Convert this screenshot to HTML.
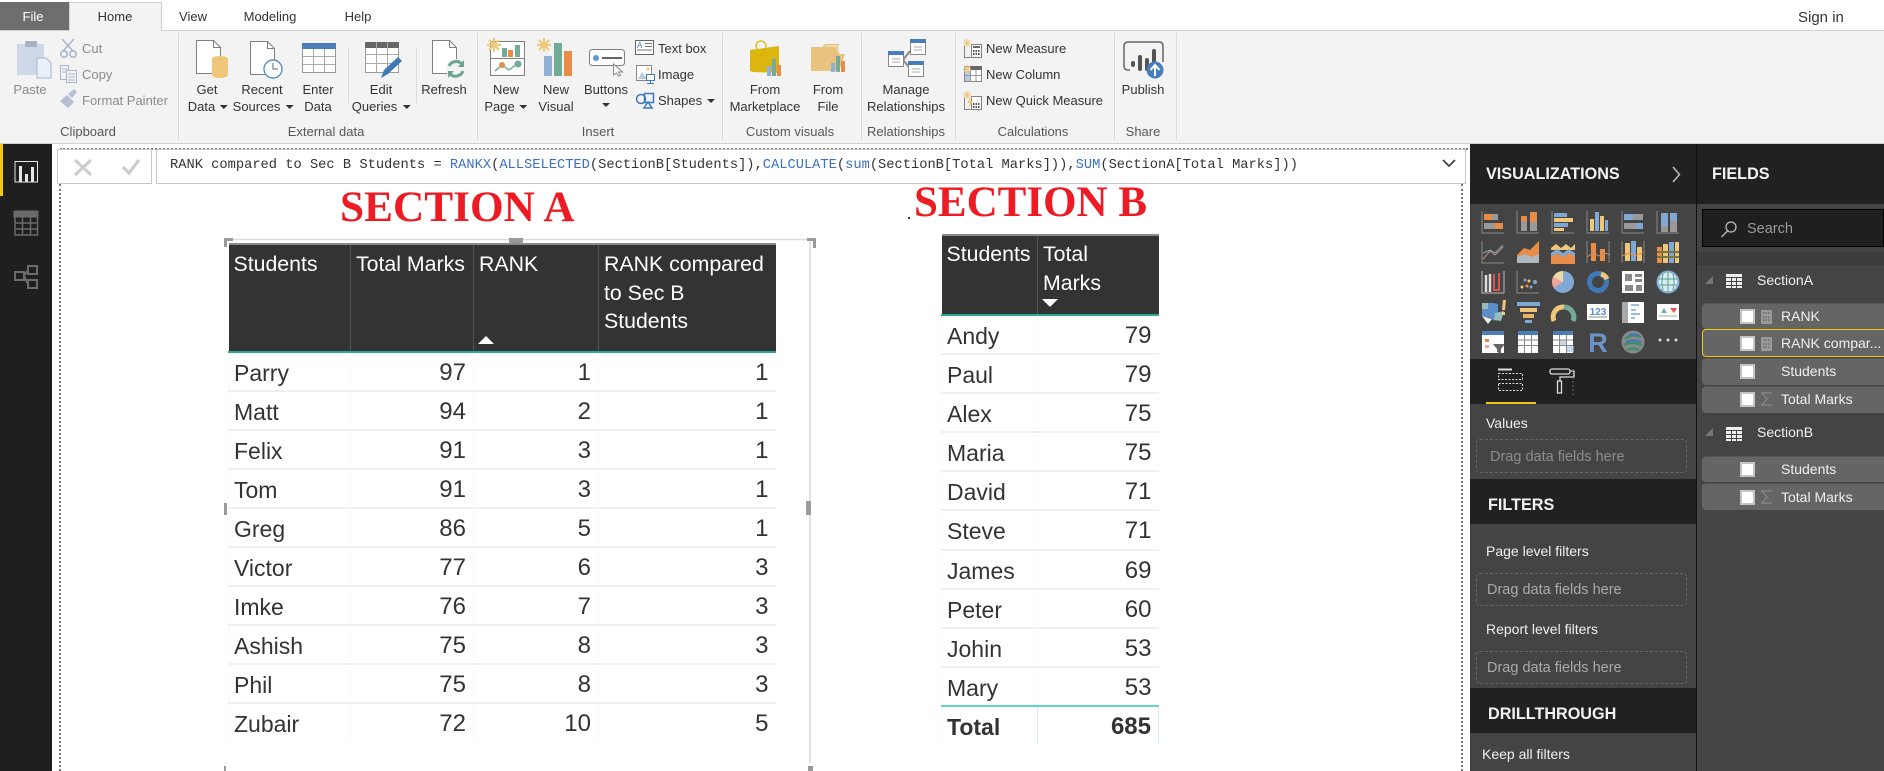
<!DOCTYPE html>
<html><head><meta charset="utf-8"><title>Power BI Desktop</title>
<style>
html,body{margin:0;padding:0;background:#fff;width:1884px;height:771px;overflow:hidden;font-family:"Liberation Sans",sans-serif}
.a{position:absolute}
.t{position:absolute;white-space:nowrap;line-height:16px;font-size:13px;color:#333}
.c{transform:translateX(-50%)}
.g{color:#8a8a8a}
.w{color:#fff}
.d{display:inline-block;width:0;height:0;border-left:4px solid transparent;border-right:4px solid transparent;border-top:4px solid #333;margin-left:5px;vertical-align:2px}
.h{font-weight:700;font-size:16.2px;color:#f2f2f2}
.f{font-size:14px;color:#f0f0f0}
.dz{position:absolute;left:1476px;width:211px;border:1px dashed #666;border-radius:4px;box-sizing:border-box}
.r{position:absolute;left:1702px;width:182px;background:#656565;border-radius:4px 0 0 4px;border-top:1px solid #555;box-sizing:border-box}
table{position:absolute;border-collapse:collapse;table-layout:fixed;font-size:23px;color:#333}
th{background:#333;color:#fff;font-weight:400;font-size:21.3px;line-height:28.5px;text-align:left;vertical-align:top;padding:5px 0 0 5px;border-left:1px solid #4c5654;border-top:2px solid #8a8a8a;border-bottom:2px solid #2aa898;box-sizing:border-box;overflow:hidden}
th:first-child{border-left:0}
td{height:39px;box-sizing:border-box;padding:2px 7px 0 5px;border-bottom:2px solid #f0f0f0;border-left:1px solid #fafafa;white-space:nowrap;line-height:30px}
td.n{text-align:right;font-size:24px}
tr:last-child td{border-bottom:0}
</style></head><body>

<!-- top / ribbon backgrounds -->
<div class="a" style="left:0;top:30px;width:1884px;height:112px;background:#f3f3f3;border-top:1px solid #d0d0d0;border-bottom:1px solid #d2d2d2;box-sizing:content-box"></div>
<div class="a" style="left:0;top:2px;width:69px;height:28px;background:#6e6e6e"></div>
<div class="a" style="left:69px;top:2px;width:93px;height:29px;background:#f3f3f3;border:1px solid #d0d0d0;border-bottom:0;box-sizing:border-box"></div>
<div class="t c w" style="left:33px;top:9px">File</div>
<div class="t c" style="left:115px;top:9px">Home</div>
<div class="t c" style="left:193px;top:9px">View</div>
<div class="t c" style="left:270px;top:9px">Modeling</div>
<div class="t c" style="left:358px;top:9px">Help</div>
<div class="t" style="left:1798px;top:10px;font-size:15px">Sign in</div>

<!-- panels -->
<div class="a" style="left:0;top:144px;width:52px;height:627px;background:#1f1f1f"></div>
<div class="a" style="left:0;top:144px;width:3px;height:52px;background:#f2c811"></div>
<div class="a" style="left:52px;top:144px;width:1418px;height:627px;background:#fff"></div>
<div class="a" style="left:60px;top:148px;width:1408px;border-top:2px dotted #777"></div>
<div class="a" style="left:59px;top:184px;height:587px;border-left:2px dotted #777"></div>
<div class="a" style="left:1461px;top:184px;height:587px;border-left:2px dotted #777"></div>
<div class="a" style="left:57px;top:149px;width:95px;height:35px;background:#fff;border:1px solid #c8c8c8;box-sizing:border-box"></div>
<div class="a" style="left:156px;top:149px;width:1310px;height:35px;background:#fff;border:1px solid #c8c8c8;box-sizing:border-box"></div>
<div class="t" style="left:170px;top:158px;font-family:'Liberation Mono',monospace;font-size:13.73px;color:#333">RANK compared to Sec B Students = <span style="color:#3a70c4">RANKX</span>(<span style="color:#3a70c4">ALLSELECTED</span>(SectionB[Students]),<span style="color:#3a70c4">CALCULATE</span>(<span style="color:#3a70c4">sum</span>(SectionB[Total Marks])),<span style="color:#3a70c4">SUM</span>(SectionA[Total Marks]))</div>

<div class="a" style="left:1470px;top:144px;width:226px;height:627px;background:#444"></div>
<div class="a" style="left:1470px;top:144px;width:226px;height:60px;background:#212121"></div>
<div class="a" style="left:1470px;top:359px;width:226px;height:45px;background:#212121"></div>
<div class="a" style="left:1470px;top:479px;width:226px;height:45px;background:#212121"></div>
<div class="a" style="left:1470px;top:688px;width:226px;height:45px;background:#212121"></div>
<div class="a" style="left:1696px;top:144px;width:188px;height:627px;background:#444;border-left:1px solid #111;box-sizing:border-box"></div>
<div class="a" style="left:1697px;top:144px;width:187px;height:60px;background:#212121"></div>
<div class="a" style="left:1697px;top:252px;width:187px;height:13px;background:#3c3c3c"></div>
<div class="a" style="left:1702px;top:209px;width:182px;height:38px;background:#1f1f1f;border:1px solid #000;box-sizing:border-box"></div>
<div class="a" style="left:1486px;top:402px;width:50px;height:2px;background:#f2c811"></div>

<div class="t h" style="left:1486px;top:166px">VISUALIZATIONS</div>
<div class="t h" style="left:1712px;top:166px">FIELDS</div>
<div class="t" style="left:1747px;top:221px;font-size:14.5px;color:#9a9a9a">Search</div>
<div class="t f" style="left:1486px;top:415px">Values</div>
<div class="dz" style="top:439px;height:34px"></div>
<div class="t" style="left:1490px;top:449px;font-size:14.5px;color:#8c8c8c">Drag data fields here</div>
<div class="t h" style="left:1488px;top:497px">FILTERS</div>
<div class="t f" style="left:1486px;top:543px">Page level filters</div>
<div class="dz" style="top:573px;height:33px"></div>
<div class="t" style="left:1487px;top:582px;font-size:14.5px;color:#aaa">Drag data fields here</div>
<div class="t f" style="left:1486px;top:621px">Report level filters</div>
<div class="dz" style="top:651px;height:33px"></div>
<div class="t" style="left:1487px;top:660px;font-size:14.5px;color:#aaa">Drag data fields here</div>
<div class="t h" style="left:1488px;top:706px">DRILLTHROUGH</div>
<div class="t f" style="left:1482px;top:746px">Keep all filters</div>

<div class="t f" style="left:1757px;top:272px">SectionA</div>
<div class="t f" style="left:1757px;top:424px">SectionB</div>
<div class="r" style="top:303px;height:26px"></div>
<div class="r" style="top:329px;height:28px;border:1px solid #f2c811;border-right:0"></div>
<div class="r" style="top:358px;height:27px"></div>
<div class="r" style="top:386px;height:27px"></div>
<div class="r" style="top:456px;height:26px"></div>
<div class="r" style="top:483px;height:27px"></div>
<div class="t f" style="left:1781px;top:308px">RANK</div>
<div class="t f" style="left:1781px;top:335px">RANK compar...</div>
<div class="t f" style="left:1781px;top:363px">Students</div>
<div class="t f" style="left:1781px;top:391px">Total Marks</div>
<div class="t f" style="left:1781px;top:461px">Students</div>
<div class="t f" style="left:1781px;top:489px">Total Marks</div>

<!-- graphics -->
<svg class="a" style="left:0;top:0" width="1884" height="771" viewBox="0 0 1884 771" fill="none">
<!-- group separators -->
<g stroke="#dcdcdc" stroke-width="1"><path d="M178.5 33V140M477.5 33V140M722.5 33V140M861.5 33V140M955.5 33V140M1114.5 33V140M1176.5 33V140M348.5 48V103M416.5 48V103"/></g>
<!-- paste -->
<rect x="17" y="44" width="27" height="31" fill="#cfd8e8"/><rect x="25" y="41" width="12" height="6" fill="#a9b3c6"/><path d="M37 58h9l5 5v15H37z" fill="#e9f0fa" stroke="#a9b6cc"/>
<!-- cut -->
<g stroke="#a9b6cc" stroke-width="1.6"><path d="M62 39l11 12M74 39L63 51"/><circle cx="64" cy="54" r="3.2"/><circle cx="73" cy="54" r="3.2"/></g>
<!-- copy -->
<g stroke="#a9b6cc"><path d="M60.5 65.5h8v14h-8z" fill="#f3f3f3"/><path d="M66.5 70.5h10v12h-10z" fill="#f3f3f3"/><path d="M68 74h7M68 77h7M68 80h7M62 69h5M62 72h4"/></g>
<!-- painter -->
<path d="M60 101l7-6 7 7-6 6zM68 94l6-5 3 3-5 6z" fill="#b4bfd2"/>
<!-- get data -->
<path d="M196.5 40.5h17l7 7v26h-24z" fill="#fff" stroke="#808080"/><path d="M213.5 40.5v7h7" stroke="#808080"/>
<path d="M212 59c0-4 16-4 16 0v16c0 4-16 4-16 0z" fill="#eec77a"/>
<!-- recent -->
<path d="M250.5 41.5h17l7 7v26h-24z" fill="#fff" stroke="#808080"/><path d="M267.5 41.5v7h7" stroke="#808080"/>
<circle cx="273" cy="69" r="9" fill="#fff" stroke="#5b8fc7" stroke-width="1.4"/><path d="M273 63v6h5" stroke="#666"/>
<!-- enter data -->
<rect x="302.5" y="43.5" width="33" height="29" fill="#fff" stroke="#999"/><rect x="302" y="43" width="34" height="6" fill="#4a7ebb"/><path d="M313.5 49v23M324.5 49v23M303 56.5h32M303 64.5h32" stroke="#aaa"/>
<!-- edit queries -->
<rect x="365.5" y="42.5" width="33" height="30" fill="#fff" stroke="#999"/><rect x="365" y="42" width="34" height="6" fill="#666"/><path d="M376.5 42v30M387.5 42v30M366 54.5h32M366 63.5h32" stroke="#aaa"/>
<path d="M381 78l3-8 14-13 4 4-14 13z" fill="#3f78b8"/>
<!-- refresh -->
<path d="M432.5 40.5h17l7 7v26h-24z" fill="#fff" stroke="#808080"/><path d="M449.5 40.5v7h7" stroke="#808080"/>
<circle cx="456" cy="69" r="10" fill="#f3f3f3"/><path d="M449 66a8 8 0 0 1 13-2M463 71a8 8 0 0 1-13 3" stroke="#6aa58f" stroke-width="3"/><path d="M464 60v7h-6zM448 78v-7h6z" fill="#6aa58f"/>
<!-- new page -->
<rect x="490.5" y="41.5" width="34" height="34" fill="#fff" stroke="#808080"/><path d="M490 58.5h34" stroke="#808080"/>
<rect x="502" y="48" width="5" height="9" fill="#72ab96"/><rect x="508" y="50" width="5" height="7" fill="#e88d47"/><rect x="515" y="45" width="5" height="12" fill="#72ab96"/>
<path d="M495 71l7-6 7 5 8-6" stroke="#72ab96" stroke-width="1.5"/><circle cx="502" cy="65" r="3" fill="#e88d47"/><circle cx="518" cy="64" r="3.5" fill="#72ab96"/>
<g stroke="#eec77a" stroke-width="2"><path d="M494 38v14M487 45h14M489 40l10 10M499 40l-10 10"/></g>
<!-- new visual -->
<rect x="544" y="56" width="8" height="20" fill="#8fb0d4"/><rect x="554" y="43" width="8" height="33" fill="#72ab96"/><rect x="564" y="51" width="8" height="25" fill="#e88d47"/>
<g stroke="#eec77a" stroke-width="2"><path d="M544 38v14M537 45h14M539 40l10 10M549 40l-10 10"/></g>
<!-- buttons -->
<rect x="589.5" y="49.5" width="35" height="16" rx="3" fill="#fff" stroke="#808080"/><circle cx="596" cy="58" r="3" fill="#5b9bd5"/><path d="M602 58h20" stroke="#666" stroke-width="2"/>
<path d="M613.5 64v11l3-2 2 3 2-1-2-3h4z" fill="#fff" stroke="#888"/>
<!-- textbox/image/shapes -->
<rect x="635.5" y="40.5" width="18" height="14" fill="#fff" stroke="#666"/><path d="M645 43.5h7M645 46.5h7M637 50h15" stroke="#777"/><text x="637" y="48" font-size="8" fill="#3f78b8" font-family="Liberation Sans,sans-serif">A</text>
<rect x="636.5" y="65.5" width="15" height="15" fill="#fff" stroke="#888"/><path d="M638 79l4-7 5 7z" fill="#b6cbe4"/><circle cx="648" cy="69" r="1.5" fill="#eec77a"/><rect x="646.5" y="74.5" width="8" height="6" fill="#fff" stroke="#3f78b8"/><path d="M650.5 81v2M647 83.5h7" stroke="#3f78b8"/>
<circle cx="641" cy="99" r="4.5" stroke="#3f78b8" stroke-width="1.5"/><rect x="644.5" y="93.5" width="9" height="9" stroke="#3f78b8" stroke-width="1.5"/><path d="M648 102l-4 6h8z" stroke="#3f78b8" stroke-width="1.5"/>
<!-- marketplace -->
<circle cx="761" cy="46" r="5" stroke="#dcb60f" stroke-width="1.3"/><path d="M750 50l29-4v27l-26-1-3-1z" fill="#dcb60f"/><rect x="767" y="66" width="4" height="10" fill="#8fb0d4"/><rect x="772" y="59" width="4" height="17" fill="#72ab96"/><rect x="777" y="65" width="4" height="11" fill="#e88d47"/>
<!-- from file -->
<path d="M811 47h11l3-3h14v10h6l-6 17h-28z" fill="#e9c27f"/><path d="M825 46h13v6" stroke="#f8f1e0"/><rect x="831" y="63" width="4" height="9" fill="#8fb0d4"/><rect x="836" y="56" width="4" height="16" fill="#72ab96"/><rect x="841" y="61" width="4" height="11" fill="#e88d47"/>
<!-- relationships -->
<path d="M903 60l7-9M903 60l6 7" stroke="#888" stroke-width="2"/>
<g fill="#fff" stroke="#888"><rect x="888.5" y="51.5" width="15" height="15"/><rect x="910.5" y="39.5" width="15" height="15"/><rect x="908.5" y="61.5" width="15" height="15"/></g>
<g fill="#4a7ebb"><rect x="888" y="51" width="16" height="4"/><rect x="910" y="39" width="16" height="4"/><rect x="908" y="61" width="16" height="4"/></g>
<path d="M892 59h8M892 62h8M914 47h8M914 50h8M912 69h8M912 72h8" stroke="#aaa"/>
<!-- calcs -->
<g stroke="#808080"><path d="M964.5 45v12.5h6" /><rect x="971.5" y="44.5" width="10" height="13" fill="#fff"/><path d="M973 47h7" stroke="#666" stroke-width="2"/><path d="M973 51h7M973 54h7" stroke-dasharray="1.5 1" stroke="#555" stroke-width="2"/></g>
<g stroke="#eec77a"><path d="M967 39v8M963 43h8M964 40l6 6M970 40l-6 6"/></g>
<rect x="964.5" y="66.5" width="17" height="15" fill="#fff" stroke="#888"/><rect x="965" y="71" width="6" height="10" fill="#b6cbe4"/><rect x="970" y="66" width="12" height="4" fill="#666"/><path d="M970.5 70v11M976 70v11M965 75.5h16" stroke="#999"/>
<g stroke="#eec77a"><path d="M967 65v8M963 69h8M964 66l6 6M970 66l-6 6"/></g>
<path d="M964.5 97v12.5h6" stroke="#808080"/><rect x="971.5" y="96.5" width="10" height="13" fill="#fff" stroke="#808080"/><path d="M973 104h7M973 107h7" stroke="#555" stroke-width="2" stroke-dasharray="1.5 1"/><path d="M971 97l-4 6h3l-2 6 5-8h-3l2-4z" fill="#eec77a"/>
<g stroke="#eec77a"><path d="M967 91v8M963 95h8M964 92l6 6M970 92l-6 6"/></g>
<!-- publish -->
<path d="M1130 70h-2q-4 0-4-4V46q0-4 4-4h31q4 0 4 4v16" stroke="#666" stroke-width="1.5"/><g stroke="#555" stroke-width="4" stroke-linecap="round"><path d="M1133 65v-2M1140 69V57M1147 69V60M1154 62V51"/></g>
<circle cx="1155" cy="70" r="8.5" fill="#4a7ebb"/><path d="M1155 76v-11M1150.5 70l4.5-5 4.5 5" stroke="#fff" stroke-width="2"/>
<!-- cancel / check -->
<path d="M75 160l16 15M91 160l-16 15" stroke="#ccc" stroke-width="3"/><path d="M123 167l6 6 10-13" stroke="#ccc" stroke-width="3.2"/>
<path d="M1443 160l6 6 6-6" stroke="#444" stroke-width="1.8"/>
<!-- left rail -->
<rect x="15" y="161.500" width="22.500" height="20.500" stroke="#e6e6e6"/><path d="M19 166h3v16h-3zM25 174h3v8h-3zM31 167h3v15h-3z" fill="#e6e6e6"/>
<g stroke="#6b6b6b"><rect x="15" y="212" width="22.500" height="23" fill="#1f1f1f" stroke-width="1.500"/><rect x="14" y="211" width="24" height="6" fill="#6b6b6b"/><path d="M22.500 217v18M30.500 217v18M15 223h23M15 229h23" stroke-width="1.500"/></g>
<g stroke="#6b6b6b" stroke-width="2"><rect x="15" y="272" width="9" height="8"/><rect x="28" y="266" width="9" height="8"/><rect x="28" y="280" width="9" height="8"/><path d="M24 276l4-6M24 276l4 8"/></g>
<!-- section dot -->
<rect x="908" y="217" width="2" height="2" fill="#333"/>
<!-- selection frame A -->
<path d="M224.500 239.500H810V763" stroke="#dcdcdc" stroke-width="1.500"/>
<path d="M224 238h9v3h-6v6h-3zM807 238h9v10h-3v-7h-6z" fill="#9a9a9a"/><rect x="509" y="238" width="14" height="5" fill="#9a9a9a"/>
<rect x="224" y="503" width="3" height="12" fill="#9a9a9a"/><rect x="806" y="501" width="5" height="14" fill="#9a9a9a"/><rect x="224" y="766" width="2" height="5" fill="#9a9a9a"/><rect x="808" y="766" width="5" height="5" fill="#9a9a9a"/>
<!-- viz tab icons -->
<g stroke="#ddd"><path d="M1498 369.500h14" stroke-width="2"/><rect x="1498.500" y="373.500" width="24" height="6" stroke-dasharray="2 1.500"/><rect x="1498.500" y="383.500" width="24" height="7" stroke-dasharray="2 1.500"/></g>
<g stroke="#ddd" stroke-width="1.300"><rect x="1550" y="369" width="20" height="5" rx="2"/><path d="M1570 371h4v6h-14v4"/><rect x="1557.500" y="381" width="4" height="12"/></g>
<path d="M1573 369v26" stroke="#666" stroke-dasharray="2 2"/>
<!-- search icon -->
<circle cx="1731" cy="227" r="5" stroke="#bbb" stroke-width="1.300"/><path d="M1727.500 231l-6 6" stroke="#bbb" stroke-width="1.300"/>
<path d="M1673 167l6.500 7.500-6.500 7.500" stroke="#bbb" stroke-width="1.500"/>
<!-- field icons -->
<path d="M1713 276v8h-8z" fill="#777"/><path d="M1713 428v8h-8z" fill="#777"/>
<g fill="#eee"><rect x="1726" y="274" width="16" height="14"/><rect x="1726" y="427" width="16" height="14"/></g>
<g stroke="#444"><path d="M1726 277.500h16M1726 281.500h16M1726 285.500h16M1731.500 277v11M1736.500 277v11M1726 430.500h16M1726 434.500h16M1726 438.500h16M1731.500 430v11M1736.500 430v11"/></g>
<g fill="#fff" stroke="#c4c4c4" stroke-width="2"><rect x="1741" y="310" width="13" height="13"/><rect x="1741" y="337" width="13" height="13"/><rect x="1741" y="365" width="13" height="13"/><rect x="1741" y="393" width="13" height="13"/><rect x="1741" y="463" width="13" height="13"/><rect x="1741" y="491" width="13" height="13"/></g>
<g fill="#999"><rect x="1761" y="310" width="11" height="14" rx="1"/><rect x="1761" y="337" width="11" height="14" rx="1"/></g>
<path d="M1763 313h7M1763 317h7M1763 320h7M1763 340h7M1763 344h7M1763 347h7" stroke="#555" stroke-dasharray="1.500 1"/>
<path d="M1772 393h-10l5 6-5 6h10M1772 491h-10l5 6-5 6h10" stroke="#8a8a8a" stroke-width="1.200"/>

<!-- viz grid row 1 -->
<g transform="translate(1493,222)"><path d="M-11-11v22h22" stroke="#888"/><rect x="-9" y="-8" width="8" height="6" fill="#e88d47"/><rect x="-1" y="-8" width="6" height="6" fill="#999"/><rect x="-9" y="1" width="11" height="6" fill="#999"/><rect x="2" y="1" width="8" height="6" fill="#e88d47"/></g>
<g transform="translate(1528,222)"><path d="M-11-11v22h22" stroke="#888"/><rect x="-7" y="-3" width="6" height="12" fill="#999"/><rect x="-7" y="-6" width="6" height="5" fill="#e88d47"/><rect x="2" y="-10" width="7" height="10" fill="#e88d47"/><rect x="2" y="0" width="7" height="9" fill="#999"/></g>
<g transform="translate(1563,222)"><path d="M-11-11v22h22" stroke="#888"/><rect x="-9" y="-9" width="13" height="4" fill="#7fa8d4"/><rect x="-9" y="-4" width="19" height="4" fill="#eec77a"/><rect x="-9" y="1" width="14" height="4" fill="#7fa8d4"/><rect x="-9" y="6" width="10" height="3" fill="#eec77a"/></g>
<g transform="translate(1598,222)"><path d="M-11-11v22h22" stroke="#888"/><rect x="-8" y="-3" width="4" height="12" fill="#eec77a"/><rect x="-3" y="-10" width="4" height="19" fill="#7fa8d4"/><rect x="2" y="-6" width="4" height="15" fill="#eec77a"/><rect x="7" y="-2" width="3" height="11" fill="#7fa8d4"/></g>
<g transform="translate(1633,222)"><path d="M-11-11v22h22" stroke="#888"/><rect x="-9" y="-8" width="9" height="6" fill="#7fa8d4"/><rect x="0" y="-8" width="10" height="6" fill="#999"/><rect x="-9" y="1" width="12" height="6" fill="#999"/><rect x="3" y="1" width="7" height="6" fill="#7fa8d4"/></g>
<g transform="translate(1668,222)"><path d="M-11-11v22h22" stroke="#888"/><rect x="-7" y="-9" width="7" height="13" fill="#7fa8d4"/><rect x="-7" y="4" width="7" height="6" fill="#999"/><rect x="2" y="-9" width="7" height="8" fill="#7fa8d4"/><rect x="2" y="-1" width="7" height="11" fill="#999"/></g>
<!-- row 2 -->
<g transform="translate(1493,252)"><path d="M-11-11v22h22" stroke="#888"/><path d="M-10 7l7-8 5 4 8-8" stroke="#c09070"/><path d="M-10 1l7-3 5 3 8-8" stroke="#7fa8d4"/></g>
<g transform="translate(1528,252)"><path d="M-11 3l7-7 6 2 9-9v22h-22z" fill="#e88d47"/><path d="M-11 5l8-3 7 3 7-3v9h-22z" fill="#b0b8c0"/></g>
<g transform="translate(1563,252)"><path d="M-12-4l5-4 5 4 5-4 5 4 4-4v6h-24z" fill="#eec77a"/><path d="M-12 1l6-4 6 4 6-4 6 4v4h-24z" fill="#7fa8d4"/><path d="M-12 5l6-4 6 4 6-4 6 4v7h-24z" fill="#e88d47"/></g>
<g transform="translate(1598,252)"><path d="M-11-11v22M11-11v22" stroke="#888"/><rect x="-7" y="-9" width="5" height="18" fill="#e88d47"/><rect x="2" y="-3" width="5" height="12" fill="#e88d47"/><path d="M-11 5l6-4 6 3 6-3 5 2" stroke="#c09070"/></g>
<g transform="translate(1633,252)"><path d="M-11-11v22M11-11v22" stroke="#888"/><rect x="-8" y="-9" width="5" height="18" fill="#eec77a"/><rect x="-2" y="-11" width="5" height="20" fill="#7fa8d4"/><rect x="4" y="-5" width="5" height="14" fill="#eec77a"/><path d="M-11 4l7-3 6 3 8-4" stroke="#e88d47"/></g>
<g transform="translate(1668,252)"><rect x="-11" y="-5" width="5" height="16" fill="#e88d47"/><rect x="-5" y="-8" width="5" height="19" fill="#eec77a"/><rect x="1" y="-10" width="5" height="21" fill="#7fa8d4"/><rect x="7" y="-10" width="4" height="21" fill="#eec77a"/><path d="M-11 0h22M-11 5h22" stroke="#774" stroke-width="2"/></g>
<!-- row 3 -->
<g transform="translate(1493,282)"><path d="M-11-11v22h22M11-11v22" stroke="#bbb"/><path d="M-7 10V-7M-3 10V-8" stroke="#ddd" stroke-width="2.500"/><path d="M1-8v16l5 0V-9" stroke="#d9534f" stroke-width="2"/></g>
<g transform="translate(1528,282)"><path d="M-11-11v22h22" stroke="#888"/><g fill="#7fa8d4"><circle cx="-3" cy="-2" r="1.500"/><circle cx="7" cy="0" r="2"/><circle cx="3" cy="5" r="1.500"/></g><g fill="#eec77a"><circle cx="1" cy="-1" r="1.500"/><circle cx="-6" cy="5" r="1.500"/></g><circle cx="-1" cy="4" r="1.500" fill="#e88d47"/></g>
<g transform="translate(1563,282)"><circle r="11" fill="#7fa8d4"/><path d="M0 0V-11a11 11 0 0 0-10 6z" fill="#f0d9a8"/><path d="M0 0L-10-5a11 11 0 0 0 1 11z" fill="#eba89a"/></g>
<g transform="translate(1598,282)"><circle r="8.500" stroke="#3e78b8" stroke-width="5"/><path d="M3-8a9 9 0 0 1 6 5" stroke="#eec77a" stroke-width="5"/></g>
<g transform="translate(1633,282)"><rect x="-11" y="-11" width="22" height="22" fill="#fff"/><path d="M-8-8h7v7h-7zM2-8h7v3h-7zM2-3h7v3h-7zM-8 3h8v6h-8zM3 3h6v6h-6z" fill="#888"/></g>
<g transform="translate(1668,282)"><circle r="10.500" fill="#d8eef0" stroke="#7fa8d4" stroke-width="2"/><path d="M-9-3h18M-9 3h18M0-10v20M-5-8q-2 8 0 16M5-8q2 8 0 16" stroke="#5d9e92"/></g>
<!-- row 4 -->
<g transform="translate(1493,312)"><path d="M-11-9l12 0 4 1v9l-4 8-3-3-9-2z" fill="#5b8fc7"/><path d="M-11-9l6 0 0 6-6 0zM2 1l9-2-3 10-7-1z" fill="#9bb"/><path d="M-11 4l6 8 4-5z" fill="#eee"/><path d="M10-12l-1 10h3l1-10zM9 0h3v3H9z" fill="#eec77a"/></g>
<g transform="translate(1528,312)"><rect x="-11" y="-10" width="23" height="4" fill="#7fa8d4"/><rect x="-8" y="-4" width="17" height="4" fill="#eec77a"/><rect x="-5" y="2" width="11" height="4" fill="#e9b36a"/><rect x="-3" y="8" width="7" height="3" fill="#7fa8d4"/></g>
<g transform="translate(1563,312)"><path d="M-9 9a10 10 0 0 1 10-14" stroke="#eec77a" stroke-width="5"/><path d="M1-5a10 10 0 0 1 9 14" stroke="#72ab96" stroke-width="5"/></g>
<g transform="translate(1598,312)"><rect x="-11" y="-8" width="22" height="16" fill="#fff"/><text x="0" y="3" text-anchor="middle" font-size="10" font-weight="700" fill="#5b8fc7" font-family="Liberation Sans,sans-serif">123</text><path d="M-9 5h18" stroke="#888"/></g>
<g transform="translate(1633,312)"><rect x="-11" y="-10" width="22" height="21" fill="#fff"/><rect x="-11" y="-10" width="6" height="21" fill="#aaa"/><path d="M-2-7h8M-2-2h5M-2 2h9M-2 6h4" stroke="#7fa8d4" stroke-width="1.500"/></g>
<g transform="translate(1668,312)"><rect x="-11" y="-8" width="22" height="16" fill="#fff"/><path d="M-7 1l3-5 3 5z" fill="#72ab96"/><path d="M2-4h7l-3 5z" fill="#d9534f"/><path d="M-9 4h18" stroke="#aaa"/></g>
<!-- row 5 -->
<g transform="translate(1493,342)"><rect x="-11" y="-11" width="22" height="22" fill="#fff"/><rect x="-11" y="-11" width="22" height="4" fill="#4a7ebb"/><path d="M-8-3h4v3h-4z" fill="#e88d47"/><path d="M-8 3h4v3h-4z" fill="#eba89a"/><path d="M0 2h12l-4 5v5l-4-2v-3z" fill="#666"/></g>
<g transform="translate(1528,342)"><rect x="-10" y="-11" width="20" height="22" fill="#fff"/><rect x="-10" y="-11" width="20" height="4" fill="#4a7ebb"/><path d="M-3.500-7v18M3.500-7v18M-10-2h20M-10 3.500h20" stroke="#888"/></g>
<g transform="translate(1563,342)"><rect x="-10" y="-11" width="20" height="22" fill="#fff"/><rect x="-10" y="-11" width="20" height="4" fill="#4a7ebb"/><rect x="-3.500" y="-2" width="7" height="6" fill="#c8d8ea"/><rect x="3.500" y="4" width="7" height="6" fill="#c8d8ea"/><path d="M-3.500-7v18M3.500-7v18M-10-2h20M-10 3.500h20" stroke="#888"/></g>
<text x="1598" y="352" text-anchor="middle" font-size="27" font-weight="700" fill="#6b93c4" font-family="Liberation Sans,sans-serif">R</text>
<g transform="translate(1633,342)"><circle r="11.500" fill="#8a8a8a"/><path d="M-8-3q8-6 16-2M-9 3q8-4 18 0M-6 8q6-3 12 0" stroke="#3c8f6a" stroke-width="2.500"/><path d="M-4-7q6-2 10 1M-7 0q8-3 15 0" stroke="#3e78b8" stroke-width="2"/></g>
<g fill="#ddd"><circle cx="1660" cy="340" r="1.500"/><circle cx="1668" cy="340" r="1.500"/><circle cx="1676" cy="340" r="1.500"/></g>
</svg>

<!-- ribbon labels -->
<div class="t c g" style="left:30px;top:82px">Paste</div>
<div class="t g" style="left:82px;top:41px">Cut</div>
<div class="t g" style="left:82px;top:67px">Copy</div>
<div class="t g" style="left:82px;top:93px">Format Painter</div>
<div class="t c" style="left:88px;top:124px;color:#555">Clipboard</div>
<div class="t c" style="left:326px;top:124px;color:#555">External data</div>
<div class="t c" style="left:207px;top:82px">Get</div><div class="t c" style="left:208px;top:99px">Data<i class="d"></i></div>
<div class="t c" style="left:262px;top:82px">Recent</div><div class="t c" style="left:263px;top:99px">Sources<i class="d"></i></div>
<div class="t c" style="left:318px;top:82px">Enter</div><div class="t c" style="left:318px;top:99px">Data</div>
<div class="t c" style="left:381px;top:82px">Edit</div><div class="t c" style="left:381px;top:99px">Queries<i class="d"></i></div>
<div class="t c" style="left:444px;top:82px">Refresh</div>
<div class="t c" style="left:506px;top:82px">New</div><div class="t c" style="left:506px;top:99px">Page<i class="d"></i></div>
<div class="t c" style="left:556px;top:82px">New</div><div class="t c" style="left:556px;top:99px">Visual</div>
<div class="t c" style="left:606px;top:82px">Buttons</div><div class="t c" style="left:606px;top:97px"><i class="d" style="margin:0"></i></div>
<div class="t" style="left:658px;top:41px">Text box</div>
<div class="t" style="left:658px;top:67px">Image</div>
<div class="t" style="left:658px;top:93px">Shapes<i class="d"></i></div>
<div class="t c" style="left:598px;top:124px;color:#555">Insert</div>
<div class="t c" style="left:765px;top:82px">From</div><div class="t c" style="left:765px;top:99px">Marketplace</div>
<div class="t c" style="left:828px;top:82px">From</div><div class="t c" style="left:828px;top:99px">File</div>
<div class="t c" style="left:790px;top:124px;color:#555">Custom visuals</div>
<div class="t c" style="left:906px;top:82px">Manage</div><div class="t c" style="left:906px;top:99px">Relationships</div>
<div class="t c" style="left:906px;top:124px;color:#555">Relationships</div>
<div class="t" style="left:986px;top:41px">New Measure</div>
<div class="t" style="left:986px;top:67px">New Column</div>
<div class="t" style="left:986px;top:93px">New Quick Measure</div>
<div class="t c" style="left:1033px;top:124px;color:#555">Calculations</div>
<div class="t c" style="left:1143px;top:82px">Publish</div>
<div class="t c" style="left:1143px;top:124px;color:#555">Share</div>

<!-- section titles -->
<div class="t" style="left:340px;top:183px;font:700 43.3px/48px 'Liberation Serif',serif;color:#ed1c24">SECTION A</div>
<div class="t" style="left:914px;top:179px;font:700 43px/48px 'Liberation Serif',serif;color:#ed1c24">SECTION B</div>

<!-- Table A -->
<table style="left:228px;top:243px;width:547px">
<colgroup><col style="width:122px"><col style="width:123px"><col style="width:125px"><col style="width:177px"></colgroup>
<tr style="height:108px"><th>Students</th><th>Total Marks</th><th>RANK</th><th>RANK compared<br>to Sec B<br>Students</th></tr>
<tr><td>Parry</td><td class="n">97</td><td class="n">1</td><td class="n">1</td></tr>
<tr><td>Matt</td><td class="n">94</td><td class="n">2</td><td class="n">1</td></tr>
<tr><td>Felix</td><td class="n">91</td><td class="n">3</td><td class="n">1</td></tr>
<tr><td>Tom</td><td class="n">91</td><td class="n">3</td><td class="n">1</td></tr>
<tr><td>Greg</td><td class="n">86</td><td class="n">5</td><td class="n">1</td></tr>
<tr><td>Victor</td><td class="n">77</td><td class="n">6</td><td class="n">3</td></tr>
<tr><td>Imke</td><td class="n">76</td><td class="n">7</td><td class="n">3</td></tr>
<tr><td>Ashish</td><td class="n">75</td><td class="n">8</td><td class="n">3</td></tr>
<tr><td>Phil</td><td class="n">75</td><td class="n">8</td><td class="n">3</td></tr>
<tr><td>Zubair</td><td class="n">72</td><td class="n">10</td><td class="n">5</td></tr>
</table>
<div class="a" style="left:478px;top:336px;width:0;height:0;border-left:8px solid transparent;border-right:8px solid transparent;border-bottom:8px solid #fff"></div>

<!-- Table B -->
<table style="left:941px;top:234px;width:217px">
<colgroup><col style="width:96px"><col style="width:121px"></colgroup>
<tr style="height:80px"><th style="padding-top:4px">Students</th><th style="padding-top:4px">Total<br>Marks</th></tr>
<tr><td>Andy</td><td class="n">79</td></tr>
<tr><td>Paul</td><td class="n">79</td></tr>
<tr><td>Alex</td><td class="n">75</td></tr>
<tr><td>Maria</td><td class="n">75</td></tr>
<tr><td>David</td><td class="n">71</td></tr>
<tr><td style="height:40px">Steve</td><td class="n" style="height:40px">71</td></tr>
<tr><td>James</td><td class="n">69</td></tr>
<tr><td>Peter</td><td class="n">60</td></tr>
<tr><td>Johin</td><td class="n">53</td></tr>
<tr><td style="border-bottom:2px solid #5fd8c8;height:39px">Mary</td><td class="n" style="border-bottom:2px solid #5fd8c8;height:39px">53</td></tr>
<tr><td style="font-weight:700;border-bottom:0;height:38px">Total</td><td class="n" style="font-weight:700;border-left:1px solid #d8f0ec;border-right:1px solid #d8f0ec;height:38px">685</td></tr>
</table>
<div class="a" style="left:1042px;top:299px;width:0;height:0;border-left:8px solid transparent;border-right:8px solid transparent;border-top:8px solid #fff"></div>

</body></html>
